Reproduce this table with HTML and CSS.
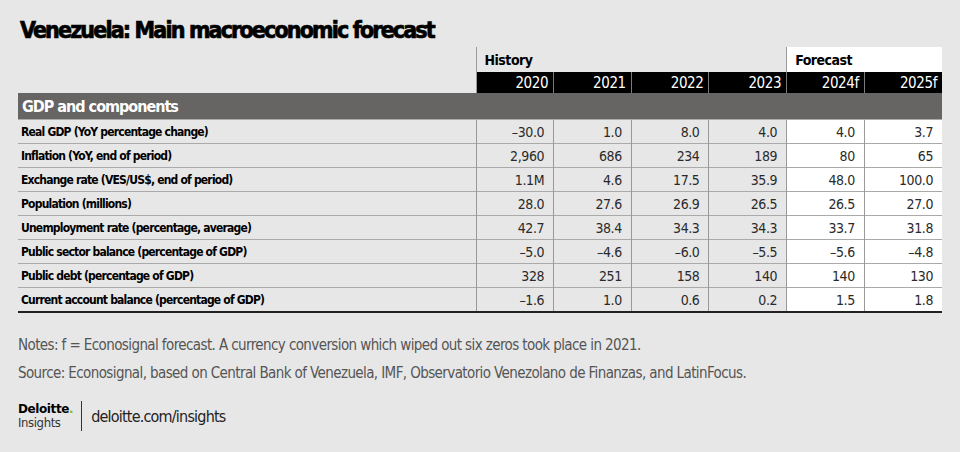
FILE: index.html
```html
<!DOCTYPE html>
<html>
<head>
<meta charset="utf-8">
<link rel="stylesheet" href="styles.css">
</head>
<body>
<div class="page">
  <h1 class="title">Venezuela: Main macroeconomic forecast</h1>
  <table class="tbl">
    <colgroup>
      <col class="c-label">
      <col class="c-num"><col class="c-num"><col class="c-num"><col class="c-num"><col class="c-num"><col class="c-num">
    </colgroup>
    <thead>
      <tr class="grp">
        <th class="blank"></th>
        <th class="hist" colspan="4">History</th>
        <th class="fore" colspan="2">Forecast</th>
      </tr>
      <tr class="years">
        <th class="blank2"></th>
        <th>2020</th><th>2021</th><th>2022</th><th>2023</th><th class="fb">2024f</th><th>2025f</th>
      </tr>
    </thead>
    <tbody>
      <tr class="section"><td colspan="7">GDP and components</td></tr>
      <tr><td class="lbl">Real GDP (YoY percentage change)</td><td>–30.0</td><td>1.0</td><td>8.0</td><td>4.0</td><td class="f">4.0</td><td class="f">3.7</td></tr>
      <tr><td class="lbl">Inflation (YoY, end of period)</td><td>2,960</td><td>686</td><td>234</td><td>189</td><td class="f">80</td><td class="f">65</td></tr>
      <tr><td class="lbl">Exchange rate (VES/US$, end of period)</td><td>1.1M</td><td>4.6</td><td>17.5</td><td>35.9</td><td class="f">48.0</td><td class="f">100.0</td></tr>
      <tr><td class="lbl">Population (millions)</td><td>28.0</td><td>27.6</td><td>26.9</td><td>26.5</td><td class="f">26.5</td><td class="f">27.0</td></tr>
      <tr><td class="lbl">Unemployment rate (percentage, average)</td><td>42.7</td><td>38.4</td><td>34.3</td><td>34.3</td><td class="f">33.7</td><td class="f">31.8</td></tr>
      <tr><td class="lbl">Public sector balance (percentage of GDP)</td><td>–5.0</td><td>–4.6</td><td>–6.0</td><td>–5.5</td><td class="f">–5.6</td><td class="f">–4.8</td></tr>
      <tr><td class="lbl">Public debt (percentage of GDP)</td><td>328</td><td>251</td><td>158</td><td>140</td><td class="f">140</td><td class="f">130</td></tr>
      <tr class="last"><td class="lbl">Current account balance (percentage of GDP)</td><td>–1.6</td><td>1.0</td><td>0.6</td><td>0.2</td><td class="f">1.5</td><td class="f">1.8</td></tr>
    </tbody>
  </table>
  <p class="note first">Notes: f = Econosignal forecast. A currency conversion which wiped out six zeros took place in 2021.</p>
  <p class="note">Source: Econosignal, based on Central Bank of Venezuela, IMF, Observatorio Venezolano de Finanzas, and LatinFocus.</p>
  <div class="brand">
    <div class="logo">
      <span class="logo-d">Deloitte<span class="dot">.</span></span>
      <span class="logo-i">Insights</span>
    </div>
    <div class="sep"></div>
    <span class="url">deloitte.com/insights</span>
  </div>
</div>
</body>
</html>
```
FILE: styles.css
```css
html, body {
  margin: 0;
  padding: 0;
}
body {
  background: #e7e7e7;
  width: 960px;
  height: 452px;
  overflow: hidden;
  font-family: "DejaVu Sans Condensed", "DejaVu Sans", sans-serif;
  color: #111;
}
.page {
  padding: 14px 18px 0 18px;
}
.title {
  margin: 0 0 0 2px;
  font-family: "DejaVu Sans Condensed", sans-serif;
  font-weight: 900;
  font-size: 23px;
  line-height: 33px;
  letter-spacing: -1.85px;
  -webkit-text-stroke: 0.7px #000;
  color: #000;
}
.tbl {
  border-collapse: collapse;
  table-layout: fixed;
  width: 924px;
}
.c-label { width: 458px; }
.c-num { width: 77.66px; }
.tbl th, .tbl td {
  padding: 0 5px;
  overflow: hidden;
  white-space: nowrap;
}
.grp th {
  height: 25px;
  text-align: left;
  font-weight: bold;
  font-size: 14px;
  letter-spacing: -0.5px;
  vertical-align: middle;
  padding-left: 8px;
  color: #000;
}
.grp .blank { padding: 0; border-right: 1px solid #9a9a9a; }
.grp .fore { background: #fff; border-left: 1px solid #9a9a9a; }
.years th {
  height: 21px;
  background: #000;
  color: #fff;
  text-align: right;
  font-weight: normal;
  font-size: 15px;
  letter-spacing: -0.4px;
  border-left: 1px solid #7a7a7a;
  padding-right: 5px;
}
.years .blank2 { background: transparent; border-left: none; border-right: 1px solid #9a9a9a; }
.tbl tbody tr.section td {
  height: 26px;
  background: #666564;
  color: #fff;
  text-align: left;
  font-weight: bold;
  font-size: 16px;
  letter-spacing: -1px;
  padding-left: 4px;
  border-top: none;
  border-left: none;
}
.tbl tbody td {
  height: 23px;
  border-top: 1px solid #aaa;
  text-align: right;
  font-size: 14px;
  letter-spacing: -0.4px;
  color: #2a2a2a;
  border-left: 1px solid #999;
  padding-right: 9px;
}
.tbl tbody td.lbl {
  text-align: left;
  font-weight: bold;
  font-size: 12px;
  letter-spacing: -0.8px;
  color: #000;
  border-left: none;
  padding-left: 3px;
}
.tbl tbody td.f { background: #fff; }
.tbl tbody tr.last td { border-bottom: 2px solid #222; }
.note {
  margin: 0;
  font-size: 15px;
  letter-spacing: -0.6px;
  color: #555;
  line-height: 28px;
}
.note.first { margin-top: 18px; }
.brand {
  display: flex;
  align-items: center;
  margin-top: 14px;
}
.logo {
  display: flex;
  flex-direction: column;
}
.logo-d {
  font-family: "DejaVu Sans", sans-serif;
  font-weight: bold;
  font-size: 12px;
  line-height: 13px;
  letter-spacing: -0.4px;
  color: #000;
}
.dot { color: #86bc25; }
.logo-i {
  font-size: 13px;
  line-height: 14px;
  letter-spacing: -0.4px;
  color: #333;
}
.sep {
  width: 1px;
  height: 30px;
  background: #333;
  margin: 0 9px 0 8px;
}
.url {
  font-size: 16px;
  letter-spacing: -0.8px;
  color: #222;
}
```
